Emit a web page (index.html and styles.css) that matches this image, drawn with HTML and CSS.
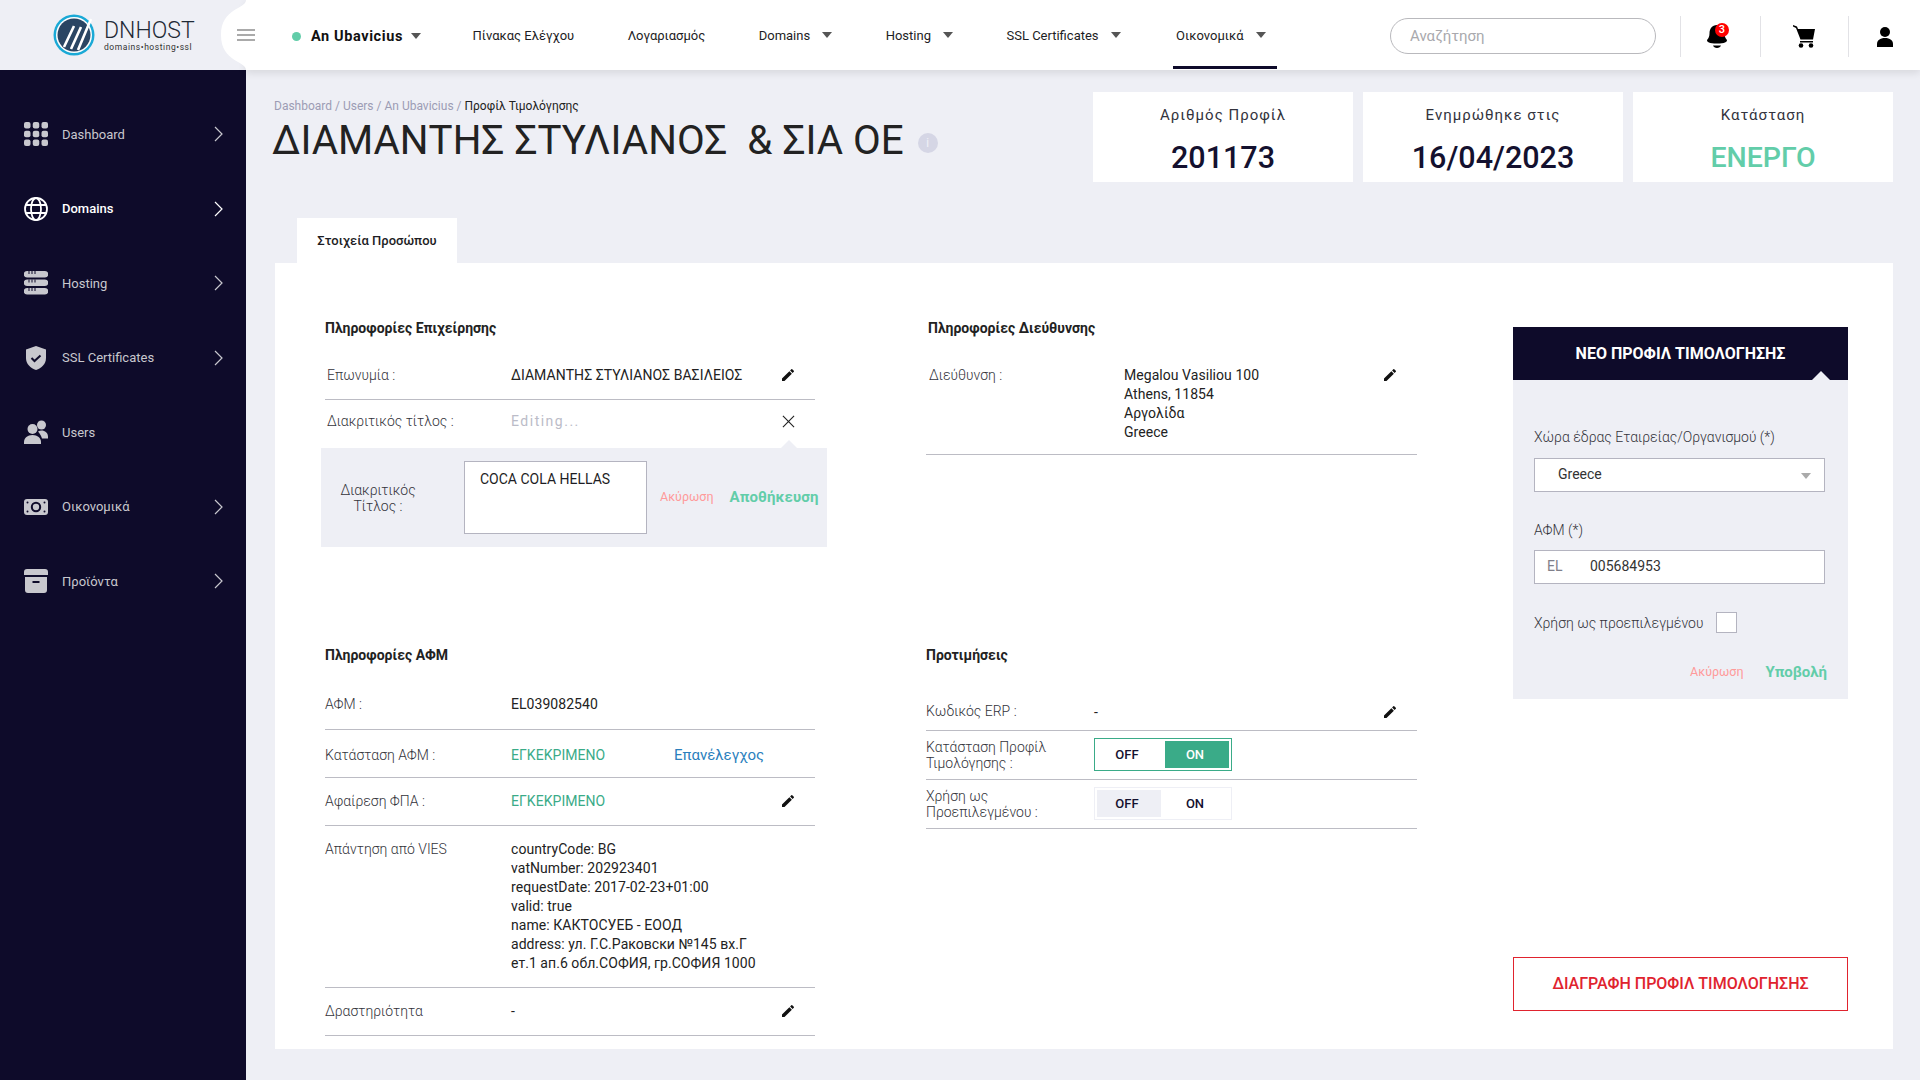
FILE: index.html
```html
<!DOCTYPE html>
<html>
    <head>
        <title>Προφίλ Τιμολόγησης</title>
        <link rel="stylesheet" href="styles.css">
    </head>
    <body>
        <svg width="0" height="0" class="defs">
            <symbol id="pencil" viewBox="0 0 24 24"><path d="M3 17.25V21h3.75L17.81 9.94l-3.75-3.75L3 17.25zM20.71 7.04a1 1 0 0 0 0-1.41l-2.34-2.34a1 1 0 0 0-1.41 0l-1.83 1.83 3.75 3.75 1.83-1.83z"/></symbol>
            <symbol id="chevron" viewBox="0 0 9 16"><path d="M1 1l7 7-7 7" fill="none" stroke="currentColor" stroke-width="1.2"/></symbol>
        </svg>

        <div class="app">
            <!-- Top bar -->
            <header class="topbar">
                <div class="logo">
                    <svg class="logo-mark" viewBox="0 0 42 42">
                        <circle cx="21" cy="21" r="20.5" fill="#1aa9d6"/>
                        <circle cx="21" cy="21" r="18" fill="#fff"/>
                        <circle cx="21" cy="21" r="16.5" fill="#2a4563"/>
                        <path d="M11 33L21 12M18 35L28 13M25 36L38 5" stroke="#fff" stroke-width="2.600" fill="none"/>
                    </svg>
                    <div class="logo-text">
                        <div class="logo-name">DNHOST</div>
                        <div class="logo-sub">domains•hosting•ssl</div>
                    </div>
                </div>
                <div class="topbar-main">
                    <svg class="notch" viewBox="0 0 25 70"><path d="M25 0C25 9 0 8 0 35c0 27 25 26 25 35z" fill="#fff"/></svg>
                    <div class="burger"><span></span><span></span><span></span></div>
                    <div class="user-select">
                        <span class="dot"></span>
                        <span class="user-name">An Ubavicius</span>
                        <span class="caret"></span>
                    </div>
                    <nav class="nav">
                        <a>Πίνακας Ελέγχου</a>
                        <a>Λογαριασμός</a>
                        <a>Domains <span class="caret"></span></a>
                        <a>Hosting <span class="caret"></span></a>
                        <a>SSL Certificates <span class="caret"></span></a>
                        <a class="active">Οικονομικά <span class="caret"></span></a>
                    </nav>
                    <div class="search">Αναζήτηση</div>
                    <div class="top-icon bell">
                        <svg width="20" height="23" viewBox="0 0 20 23"><path d="M10 0C5 0 2.500 4 2.500 8.500c0 3-1 5-2.500 6.500 0 2 2 3.500 10 3.500S20 17 20 15c-1.500-1.500-2.500-3.500-2.500-6.500C17.500 4 15 0 10 0zM6 20.500h8c-.5 1.500-2 2.500-4 2.500s-3.500-1-4-2.500z"/></svg>
                        <span class="badge">3</span>
                    </div>
                    <div class="top-icon cart">
                        <svg width="22" height="23" viewBox="0 0 22 23"><path d="M0 0l4 1.500L5 4h17l-2 10.500H7.500L3 3 0 1.500zM7 16h13v1.600H7z"/><circle cx="8" cy="20.500" r="2.300"/><circle cx="18" cy="20.500" r="2.300"/></svg>
                    </div>
                    <div class="top-icon profile">
                        <svg width="16" height="20" viewBox="0 0 16 20"><circle cx="8" cy="5" r="5"/><path d="M0 20v-3c0-3.500 3-6 8-6s8 2.500 8 6v3z"/></svg>
                    </div>
                </div>
            </header>

            <!-- Sidebar -->
            <aside class="sidebar">
                <a class="side-item">
                    <svg class="side-icon" viewBox="0 0 24 24"><rect x="0" y="0" width="6.500" height="6.500" rx="2"/><rect x="8.750" y="0" width="6.500" height="6.500" rx="2"/><rect x="17.500" y="0" width="6.500" height="6.500" rx="2"/><rect x="0" y="8.750" width="6.500" height="6.500" rx="2"/><rect x="8.750" y="8.750" width="6.500" height="6.500" rx="2"/><rect x="17.500" y="8.750" width="6.500" height="6.500" rx="2"/><rect x="0" y="17.500" width="6.500" height="6.500" rx="2"/><rect x="8.750" y="17.500" width="6.500" height="6.500" rx="2"/><rect x="17.500" y="17.500" width="6.500" height="6.500" rx="2"/></svg>
                    <span>Dashboard</span>
                    <svg class="chev"><use href="#chevron"/></svg>
                </a>
                <a class="side-item active">
                    <svg class="side-icon" viewBox="0 0 24 24" fill="none" stroke="#fff" stroke-width="1.800"><circle cx="12" cy="12" r="11"/><ellipse cx="12" cy="12" rx="5" ry="11"/><path d="M2 8h20M2 16h20"/></svg>
                    <span>Domains</span>
                    <svg class="chev"><use href="#chevron"/></svg>
                </a>
                <a class="side-item">
                    <svg class="side-icon" viewBox="0 0 24 24"><path d="M3 0h18a3 3 0 0 1 0 6.500H3A3 3 0 0 1 3 0zM3 8.500h18a3 3 0 0 1 0 6.500H3a3 3 0 0 1 0-6.500zM3 17h18a3 3 0 0 1 0 6.500H3A3 3 0 0 1 3 17z"/><path d="M5 0v3M8 0v3M11 0v3M5 8.500v3M8 8.500v3M11 8.500v3M5 17v3M8 17v3M11 17v3" stroke="#0e0b2a" stroke-width="1"/></svg>
                    <span>Hosting</span>
                    <svg class="chev"><use href="#chevron"/></svg>
                </a>
                <a class="side-item">
                    <svg class="side-icon" viewBox="0 0 24 24"><path d="M12 0l10 3.500V12c0 6-4.500 10-10 12C6.500 22 2 18 2 12V3.500z"/><path d="M7.500 12l3 3 6-5.500" fill="none" stroke="#0e0b2a" stroke-width="2"/></svg>
                    <span>SSL Certificates</span>
                    <svg class="chev"><use href="#chevron"/></svg>
                </a>
                <a class="side-item">
                    <svg class="side-icon" viewBox="0 0 24 24"><circle cx="8.500" cy="9" r="5"/><circle cx="17.500" cy="5" r="4.500"/><path d="M0 24v-2c0-4 3.500-7 8.500-7s8.500 3 8.500 7v2z"/><path d="M14 11.500c1-.7 2.300-1 3.500-1 3.500 0 6.500 2.500 6.500 6v2h-6c-.6-2.500-2-4.500-4-7z"/></svg>
                    <span>Users</span>
                    <svg class="chev hidden"><use href="#chevron"/></svg>
                </a>
                <a class="side-item">
                    <svg class="side-icon" viewBox="0 0 24 24"><rect x="0" y="4" width="24" height="16" rx="3"/><circle cx="12" cy="12" r="4.200" fill="none" stroke="#0e0b2a" stroke-width="2"/><g fill="#0e0b2a"><circle cx="3.500" cy="7.500" r="1"/><circle cx="20.500" cy="7.500" r="1"/><circle cx="3.500" cy="16.500" r="1"/><circle cx="20.500" cy="16.500" r="1"/></g></svg>
                    <span>Οικονομικά</span>
                    <svg class="chev"><use href="#chevron"/></svg>
                </a>
                <a class="side-item">
                    <svg class="side-icon" viewBox="0 0 24 24"><path d="M3 0h18a3 3 0 0 1 3 3v3H0V3a3 3 0 0 1 3-3zM1 8h22v13a3 3 0 0 1-3 3H4a3 3 0 0 1-3-3z"/><path d="M8.500 13h7" stroke="#0e0b2a" stroke-width="2"/></svg>
                    <span>Προϊόντα</span>
                    <svg class="chev"><use href="#chevron"/></svg>
                </a>
            </aside>

            <main class="main">
                <div class="page-top">
                    <div class="page-title">
                        <div class="breadcrumb">Dashboard / Users / An Ubavicius / <b>Προφίλ Τιμολόγησης</b></div>
                        <h1>ΔΙΑΜΑΝΤΗΣ ΣΤΥΛΙΑΝΟΣ &nbsp;&amp; ΣΙΑ ΟΕ <span class="info">i</span></h1>
                    </div>
                    <div class="stat">
                        <div class="stat-label">Αριθμός Προφίλ</div>
                        <div class="stat-value">201173</div>
                    </div>
                    <div class="stat">
                        <div class="stat-label">Ενημρώθηκε στις</div>
                        <div class="stat-value">16/04/2023</div>
                    </div>
                    <div class="stat">
                        <div class="stat-label">Κατάσταση</div>
                        <div class="stat-value green">ΕΝΕΡΓΟ</div>
                    </div>
                </div>

                <div class="tab">Στοιχεία Προσώπου</div>

                <div class="panel">
                    <div class="sections">
                        <section>
                            <h3 class="first">Πληροφορίες Επιχείρησης</h3>
                            <div class="row top-row">
                                <div class="label inset">Επωνυμία :</div>
                                <div class="value">ΔΙΑΜΑΝΤΗΣ ΣΤΥΛΙΑΝΟΣ ΒΑΣΙΛΕΙΟΣ</div>
                                <svg class="pencil"><use href="#pencil"/></svg>
                            </div>
                            <div class="row editing">
                                <div class="label inset">Διακριτικός τίτλος :</div>
                                <div class="value muted">Editing...</div>
                                <svg class="close" viewBox="0 0 14 14"><path d="M1 1l12 12M13 1L1 13" stroke="#222" stroke-width="1.200"/></svg>
                            </div>
                            <div class="edit-box">
                                <div class="edit-label">Διακριτικός Τίτλος :</div>
                                <div class="edit-area">COCA COLA HELLAS</div>
                                <a class="cancel">Ακύρωση</a>
                                <a class="save">Αποθήκευση</a>
                            </div>
                        </section>

                        <section>
                            <h3 class="first indent">Πληροφορίες Διεύθυνσης</h3>
                            <div class="row address-row">
                                <div class="label inset wide">Διεύθυνση :</div>
                                <div class="value">Megalou Vasiliou 100<br>Athens, 11854<br>Αργολίδα<br>Greece</div>
                                <svg class="pencil"><use href="#pencil"/></svg>
                            </div>
                        </section>

                        <section>
                            <h3>Πληροφορίες ΑΦΜ</h3>
                            <div class="row vat-row">
                                <div class="label">ΑΦΜ :</div>
                                <div class="value">EL039082540</div>
                            </div>
                            <div class="row vat-status">
                                <div class="label">Κατάσταση ΑΦΜ :</div>
                                <div class="value approved">ΕΓΚΕΚΡΙΜΕΝΟ</div>
                                <a class="recheck">Επανέλεγχος</a>
                            </div>
                            <div class="row">
                                <div class="label">Αφαίρεση ΦΠΑ :</div>
                                <div class="value approved">ΕΓΚΕΚΡΙΜΕΝΟ</div>
                                <svg class="pencil"><use href="#pencil"/></svg>
                            </div>
                            <div class="row">
                                <div class="label">Απάντηση από VIES</div>
                                <div class="value">countryCode: BG<br>vatNumber: 202923401<br>requestDate: 2017-02-23+01:00<br>valid: true<br>name: КАКТОСУЕБ - ЕООД<br>address: ул. Г.С.Раковски №145 вх.Г<br>ет.1 ап.6 обл.СОФИЯ, гр.СОФИЯ 1000</div>
                            </div>
                            <div class="row">
                                <div class="label">Δραστηριότητα</div>
                                <div class="value">-</div>
                                <svg class="pencil"><use href="#pencil"/></svg>
                            </div>
                        </section>

                        <section>
                            <h3 class="prefs-title">Προτιμήσεις</h3>
                            <div class="row erp-row">
                                <div class="label narrow">Κωδικός ERP :</div>
                                <div class="value">-</div>
                                <svg class="pencil"><use href="#pencil"/></svg>
                            </div>
                            <div class="row toggle-row">
                                <div class="label narrow">Κατάσταση Προφίλ Τιμολόγησης :</div>
                                <div class="toggle is-on"><span>OFF</span><span class="sel">ON</span></div>
                            </div>
                            <div class="row toggle-row">
                                <div class="label narrow">Χρήση ως Προεπιλεγμένου :</div>
                                <div class="toggle"><span class="sel">OFF</span><span>ON</span></div>
                            </div>
                        </section>
                    </div>

                    <div class="side-col">
                        <div class="new-profile">
                            <div class="new-head">ΝΕΟ ΠΡΟΦΙΛ ΤΙΜΟΛΟΓΗΣΗΣ</div>
                            <div class="new-body">
                                <label>Χώρα έδρας Εταιρείας/Οργανισμού (*)</label>
                                <div class="field select">Greece<span class="caret"></span></div>
                                <label class="vat-label">ΑΦΜ (*)</label>
                                <div class="field vat"><span class="prefix">EL</span>005684953</div>
                                <div class="check-row">Χρήση ως προεπιλεγμένου <span class="checkbox"></span></div>
                                <div class="actions">
                                    <a class="cancel">Ακύρωση</a>
                                    <a class="save">Υποβολή</a>
                                </div>
                            </div>
                        </div>
                        <a class="delete">ΔΙΑΓΡΑΦΗ ΠΡΟΦΙΛ ΤΙΜΟΛΟΓΗΣΗΣ</a>
                    </div>
                </div>
            </main>
        </div>
    </body>
</html>
```

FILE: styles.css
```css
*{
    box-sizing: border-box;
}
body{
    font-family: Roboto, "Liberation Sans", sans-serif;
    margin: 0;
    background-color: #eeeff5;
    color: #1d1d24;
    font-size: 14px;
}
.defs{
    display: block;
    height: 0;
}
.app{
    display: grid;
    grid-template-columns: 246px 1fr;
    grid-template-rows: 70px 1fr;
    height: 1080px;
    overflow: hidden;
}

/* top bar */
.topbar{
    grid-column: 1 / 3;
    display: flex;
    z-index: 2;
}
.logo{
    width: 246px;
    display: flex;
    align-items: center;
    padding-left: 53px;
    gap: 9px;
}
.logo-mark{
    width: 42px;
    height: 42px;
}
.logo-name{
    font-size: 23px;
    font-weight: 300;
    line-height: 24px;
    color: #1f2a36;
}
.logo-sub{
    font-size: 8.5px;
    line-height: 9px;
    letter-spacing: .55px;
    color: #333;
}
.topbar-main{
    position: relative;
    flex: 1;
    display: flex;
    align-items: center;
    background-color: #fff;
    box-shadow: 0 3px 8px rgba(0,0,0,0.1);
}
.notch{
    position: absolute;
    left: -25px;
    top: 0;
    width: 25px;
    height: 70px;
}
.burger{
    position: relative;
    margin-left: -9px;
    width: 18px;
}
.burger span{
    display: block;
    height: 2px;
    background-color: #aaa;
    margin: 3px 0;
}
.caret{
    display: inline-block;
    border-left: 5.5px solid transparent;
    border-right: 5.5px solid transparent;
    border-top: 6px solid #555;
    vertical-align: 2px;
}
.user-select{
    display: flex;
    align-items: center;
    margin-left: 37px;
    margin-top: 2px;
}
.dot{
    width: 9px;
    height: 9px;
    border-radius: 50%;
    background-color: #62cda9;
    margin-right: 10px;
}
.user-name{
    font-weight: 700;
    font-size: 14.5px;
    letter-spacing: .6px;
    margin-right: 8px;
    color: #111;
}
.nav{
    display: flex;
    gap: 53.5px;
    margin-left: 51.5px;
    height: 70px;
    align-items: center;
    font-size: 13px;
}
.nav a{
    position: relative;
    display: flex;
    align-items: center;
    gap: 12px;
    color: #1d1d24;
}
.nav a .caret{
    vertical-align: 0;
}
.nav a.active{
    margin-left: 2px;
}
.nav a.active::after{
    content: "";
    position: absolute;
    left: -3px;
    right: -11px;
    bottom: -26px;
    height: 3px;
    background-color: #0e0b2a;
}
.search{
    margin-left: auto;
    margin-right: 24px;
    margin-top: 2px;
    width: 266px;
    height: 36px;
    border: 1px solid #b9b9bd;
    border-radius: 18px;
    padding-left: 19px;
    line-height: 34px;
    font-size: 15px;
    color: #a9a9ad;
}
.top-icon{
    position: relative;
    align-self: flex-start;
    margin-top: 16px;
    height: 41px;
    border-left: 1px solid #e2e2e6;
    display: flex;
    justify-content: center;
    align-items: center;
}
.bell{
    width: 80px;
    padding-right: 8px;
}
.cart{
    width: 88px;
    padding-right: 2px;
}
.profile{
    width: 72px;
}
.badge{
    position: absolute;
    top: 7px;
    left: 34px;
    width: 14px;
    height: 14px;
    border-radius: 50%;
    background-color: #f00;
    color: #fff;
    font-size: 11px;
    font-weight: 500;
    line-height: 14px;
    text-align: center;
}

/* sidebar */
.sidebar{
    background-color: #0e0b2a;
    padding-top: 27px;
}
.side-item{
    display: flex;
    align-items: center;
    height: 74.5px;
    padding-left: 24px;
    color: #c8c8ce;
    font-size: 13px;
}
.side-item.active{
    color: #fff;
    font-weight: 500;
}
.side-icon{
    width: 24px;
    height: 24px;
    margin-right: 14px;
    fill: #c8c8ce;
}
.side-item.active .side-icon{
    fill: none;
}
.chev{
    width: 9px;
    height: 16px;
    margin-left: auto;
    margin-right: 23px;
}
.chev.hidden{
    visibility: hidden;
}

/* page */
.main{
    padding: 22px 27px 0 29px;
}
.page-top{
    display: flex;
    gap: 10px;
}
.page-title{
    flex: 1;
    padding-top: 6px;
    margin-left: -1px;
}
.breadcrumb{
    font-size: 12px;
    line-height: 16px;
    color: #9c9cb4;
}
.breadcrumb b{
    font-weight: 400;
    color: #222;
}
h1{
    font-size: 40.3px;
    font-weight: 400;
    line-height: 48px;
    margin: 3px 0 0 -2px;
    color: #222;
}
.info{
    display: inline-block;
    width: 20px;
    height: 20px;
    border-radius: 50%;
    background-color: #d5d6e5;
    color: #eeeff5;
    font-size: 13px;
    line-height: 20px;
    text-align: center;
    vertical-align: 7px;
    margin-left: 4px;
}
.stat{
    width: 260px;
    height: 90px;
    background-color: #fff;
    text-align: center;
    padding-top: 13px;
}
.stat-label{
    font-size: 15px;
    letter-spacing: 1px;
    line-height: 20px;
    color: #33333d;
}
.stat-value{
    font-size: 30.5px;
    font-weight: 500;
    line-height: 40px;
    margin-top: 13px;
    color: #14112f;
}
.stat-value.green{
    font-size: 28.5px;
    color: #62cda9;
}
.tab{
    width: 160px;
    height: 45px;
    margin: 36px 0 0 22px;
    background-color: #fff;
    text-align: center;
    line-height: 45px;
    font-size: 13px;
    font-weight: 500;
}
.panel{
    display: flex;
    background-color: #fff;
    padding: 57px 45px 13px 50px;
    height: 786px;
}
.sections{
    display: grid;
    grid-template-columns: 490px 491px;
    grid-template-rows: 327px auto;
    column-gap: 111px;
}
h3{
    font-size: 14px;
    font-weight: 700;
    line-height: 16px;
    margin: 0 0 19px;
    color: #222;
}
h3.first{
    margin-bottom: 17px;
}
h3.indent{
    padding-left: 2px;
}
.row{
    display: flex;
    border-bottom: 1px solid #bcbcc4;
    padding: 14px 0;
    line-height: 19px;
    align-items: flex-start;
}
.top-row{
    padding: 13px 0 14px;
}
.address-row{
    padding: 13px 0 12px;
}
.vat-row{
    padding: 13px 0 15px;
}
.vat-status{
    padding: 16px 0 12px;
}
.editing{
    border-bottom: 0;
    padding: 12px 0 17px;
}
.erp-row{
    padding: 10px 0 8px;
    margin-top: 30px;
}
.toggle-row{
    padding: 7px 0 8px;
    align-items: center;
}
.label{
    width: 186px;
    flex: none;
    color: #33333a;
    font-size: 14px;
    font-weight: 300;
}
.label.inset{
    padding-left: 2px;
}
.label.wide{
    width: 198px;
    padding-left: 3px;
}
.label.narrow{
    width: 168px;
    line-height: 16px;
}
.value{
    font-size: 14px;
    letter-spacing: .05px;
    color: #222;
}
.value.muted{
    color: #bbbcc8;
    letter-spacing: 1.5px;
}
.value.approved{
    color: #3aab88;
    width: 163px;
}
.recheck{
    color: #2b7fbd;
    font-size: 15px;
}
.pencil{
    width: 16px;
    height: 16px;
    margin: 1px 19px 0 auto;
    fill: #111;
}
.close{
    width: 13px;
    height: 13px;
    margin: 3px 20px 0 auto;
}

/* inline edit */
.edit-box{
    position: relative;
    display: flex;
    align-items: center;
    width: 506px;
    height: 99px;
    margin-left: -4px;
    background-color: #eeeff5;
}
.edit-box::before{
    content: "";
    position: absolute;
    right: 30px;
    top: -8px;
    border-left: 8px solid transparent;
    border-right: 8px solid transparent;
    border-bottom: 8px solid #eeeff5;
}
.edit-label{
    width: 82px;
    margin: 0 45px 0 16px;
    text-align: center;
    line-height: 16px;
    font-weight: 300;
    color: #33333a;
}
.edit-area{
    width: 183px;
    height: 73px;
    background-color: #fff;
    border: 1px solid #b4b4c0;
    padding: 8px 15px;
    margin-right: 13px;
    line-height: 18px;
}
.cancel{
    font-size: 12.5px;
    color: #ff9a9a;
}
.save{
    font-size: 15px;
    font-weight: 700;
    color: #62cda9;
}
.edit-box .cancel,
.edit-box .save{
    margin-bottom: 2px;
}
.edit-box .save{
    margin-left: 16px;
    letter-spacing: .1px;
}

/* toggles */
.toggle{
    display: flex;
    gap: 4px;
    width: 138px;
    height: 33px;
    padding: 2px;
    border: 1px solid #eeeff5;
    font-size: 13px;
    font-weight: 500;
    color: #14112f;
}
.toggle span{
    flex: 1 1 0;
    text-align: center;
    line-height: 27px;
    text-indent: -4px;
}
.toggle .sel{
    background-color: #eeeff5;
}
.toggle.is-on{
    border-color: #3aab88;
}
.toggle.is-on .sel{
    background-color: #3aab88;
    color: #fff;
}

/* right column */
.side-col{
    width: 335px;
    margin-left: 96px;
    padding-top: 7px;
    height: 691px;
    display: flex;
    flex-direction: column;
    justify-content: space-between;
}
.new-head{
    position: relative;
    height: 53px;
    line-height: 53px;
    background-color: #0e0b2a;
    color: #fff;
    text-align: center;
    font-weight: 700;
    font-size: 16px;
}
.new-head::after{
    content: "";
    position: absolute;
    right: 18px;
    bottom: 0;
    border-left: 9px solid transparent;
    border-right: 9px solid transparent;
    border-bottom: 9px solid #eeeff5;
}
.new-body{
    background-color: #eeeff5;
    padding: 47px 23px 17px 21px;
}
.new-body label{
    display: block;
    line-height: 20px;
    margin-bottom: 11px;
    font-weight: 300;
    color: #33333a;
}
.new-body .vat-label{
    margin: 28px 0 10px;
}
.field{
    position: relative;
    height: 34px;
    background-color: #fff;
    border: 1px solid #b4b4c0;
    line-height: 31px;
    color: #333;
}
.select{
    padding-left: 23px;
}
.select .caret{
    position: absolute;
    right: 13px;
    top: 14px;
    border-top-color: #aaa;
}
.prefix{
    display: inline-block;
    width: 55px;
    padding-left: 12px;
    color: #7f7f8a;
}
.check-row{
    display: flex;
    align-items: center;
    margin-top: 28px;
    font-weight: 300;
    color: #33333a;
}
.checkbox{
    width: 21px;
    height: 21px;
    margin-left: 13px;
    background-color: #fff;
    border: 1px solid #b4b4c0;
}
.actions{
    display: flex;
    justify-content: flex-end;
    align-items: center;
    gap: 22px;
    margin: 29px -2px 0 0;
    line-height: 20px;
}
.delete{
    height: 54px;
    border: 1px solid #e0232e;
    color: #e0232e;
    text-align: center;
    line-height: 52px;
    font-weight: 500;
    font-size: 16px;
}
```
